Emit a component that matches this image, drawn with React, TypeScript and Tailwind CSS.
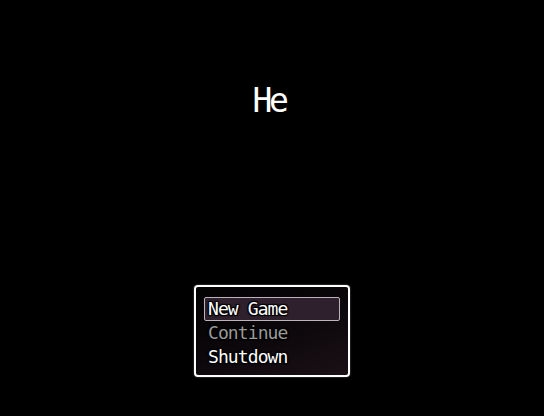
import React from "react";

const mono = { fontFamily: '"DejaVu Sans Mono", "Liberation Mono", monospace' };

export default function App() {
  const outline =
    "[text-shadow:0_0_2px_#000,1px_1px_1px_#000,-1px_-1px_1px_#000,1px_-1px_1px_#000,-1px_1px_1px_#000]";
  return (
    <div className="w-[544px] h-[416px] bg-black flex flex-col items-center overflow-hidden" style={mono}>
      <div
        className={`mt-[81px] h-[40px] leading-[40px] text-[33px] tracking-[-3.4px] text-white ${outline}`}
        style={{ ...mono, transform: "translateX(-3px)" }}
      >
        He
      </div>
      <div className="mt-[164px] w-[156px] h-[92px] border-2 border-white rounded-[4px] bg-[linear-gradient(160deg,#030203_0%,#0b070a_50%,#1a1016_100%)] pl-[8px] pr-[8px] pt-[10px] shadow-[0_0_2px_rgba(255,255,255,0.4)]">
        <div className="flex flex-col">
          <div className={`h-[24px] leading-[24px] text-[18px] tracking-[-0.9px] text-white pl-[4px] border border-[#bdb3ba] rounded-[2px] bg-[#2e212d] ${outline}`}>
            <span className="relative top-[-1px] left-[-1px]">New Game</span>
          </div>
          <div className={`h-[24px] leading-[24px] text-[18px] tracking-[-0.9px] text-[#9a9a9a] pl-[4px] ${outline}`}>
            Continue
          </div>
          <div className={`h-[24px] leading-[24px] text-[18px] tracking-[-0.9px] text-white pl-[4px] ${outline}`}>
            Shutdown
          </div>
        </div>
      </div>
    </div>
  );
}
